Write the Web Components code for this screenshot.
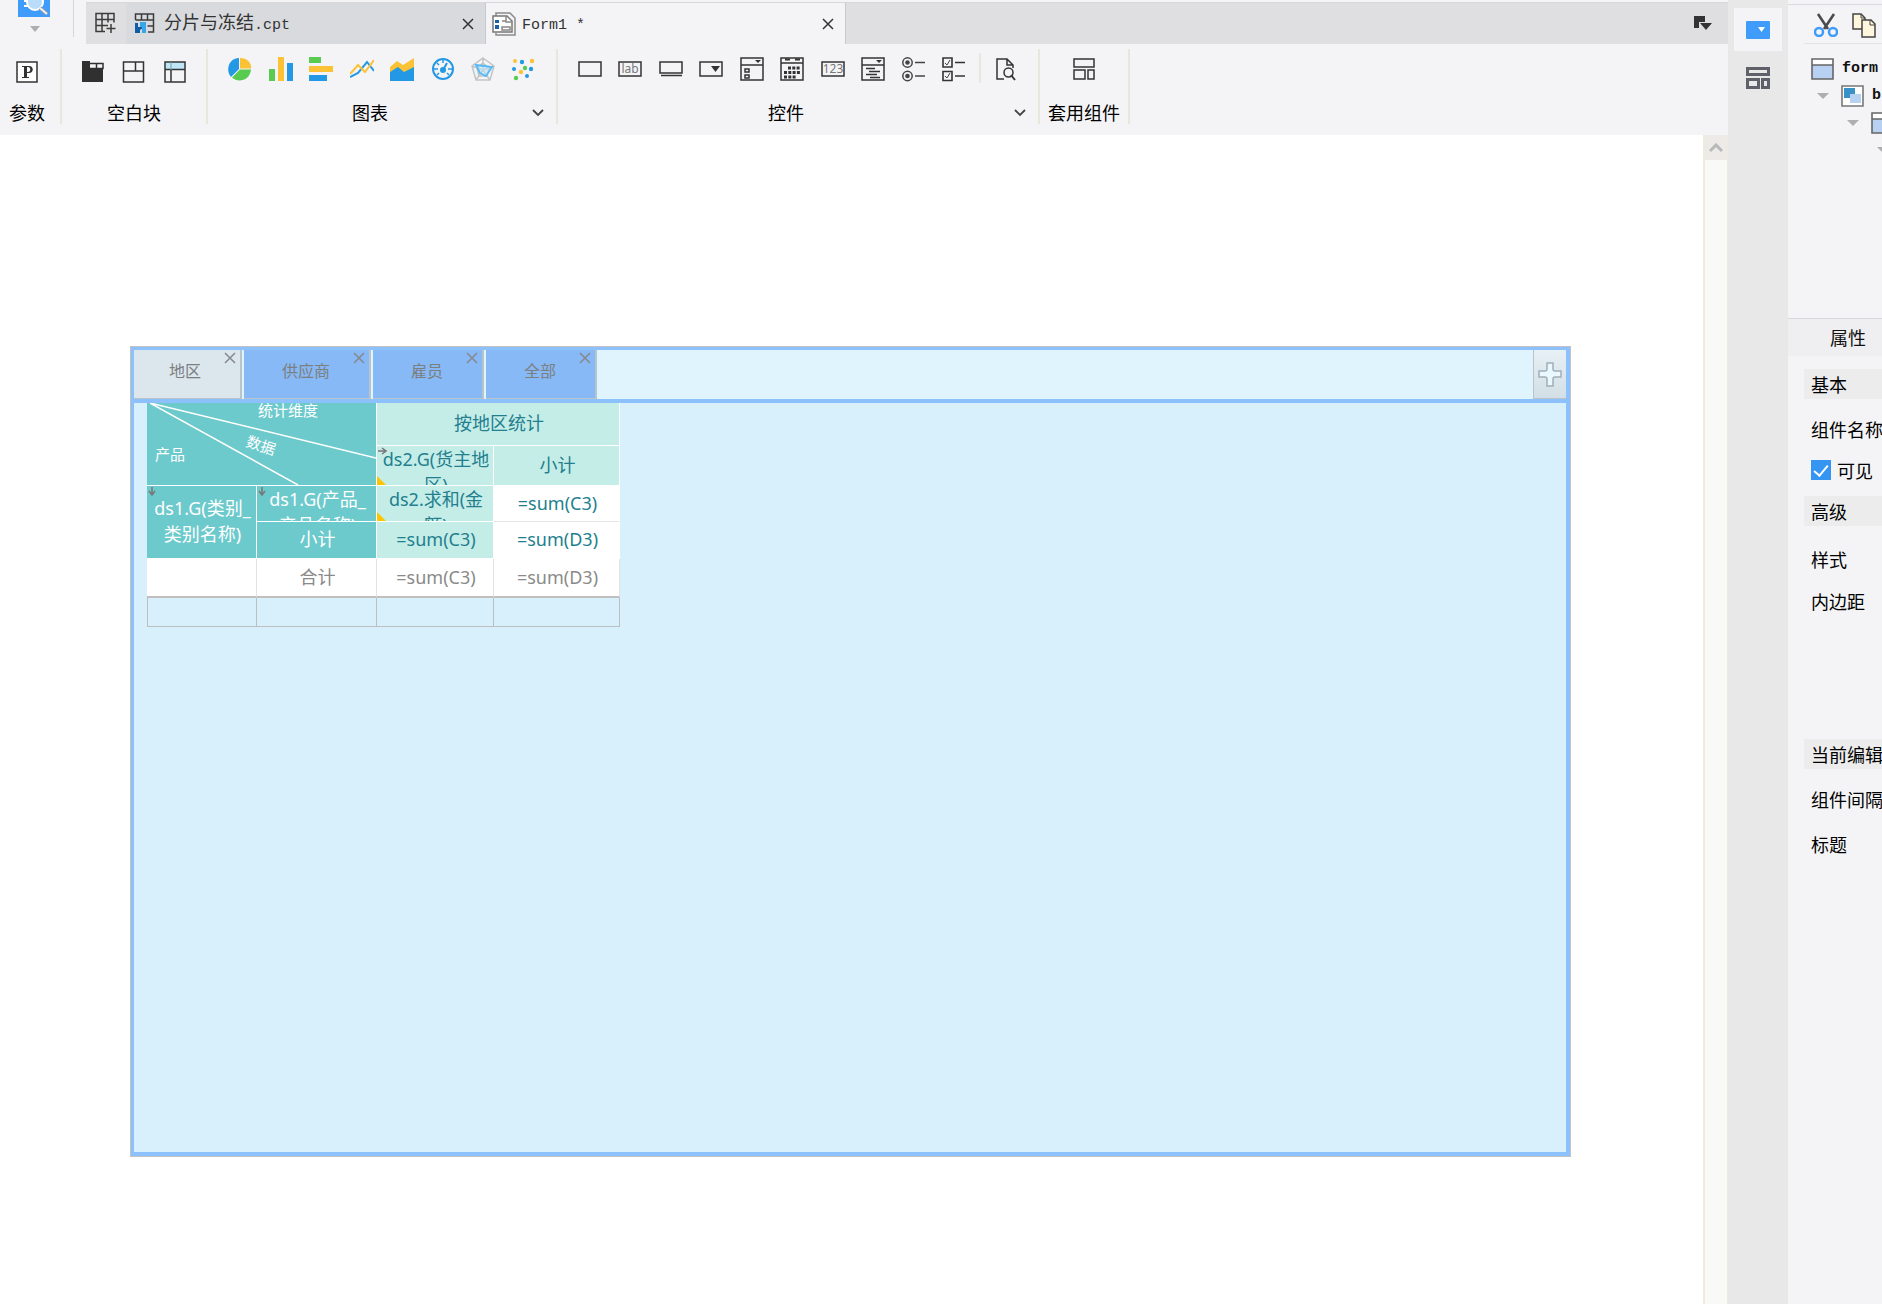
<!DOCTYPE html>
<html lang="zh-CN">
<head>
<meta charset="utf-8">
<title>Form1</title>
<style>
  html, body {
    margin: 0;
    height: 100%;
  }
  body {
    font-family: "Noto Sans CJK SC", sans-serif;
    font-size: 18px;
    line-height: 24px;
    color: #111;
    overflow: hidden;
  }
</style>
</head>
<body>
<report-designer></report-designer>

<script>
const icons = {
  preview: `<path d="M0 0h32v17H0z" fill="#409cfa"/><path d="M6 0h8v2H6zM6 5h7v2H6z" fill="#fff"/><circle cx="17" cy="2" r="8" fill="#b9dcf8" stroke="#fff" stroke-width="2"/><path d="m22 8 7 6" stroke="#8c98a4" stroke-width="4"/><path d="m22 8 7 6" stroke="#eef2f5" stroke-width="2"/><path d="M12 26h10l-5 6z" fill="#aeaeae"/>`,
  newGrid: `<path d="M2 13.500V1.500h18v9M2 7.500h18M8 1.500v18M14 1.500v9M2 13.500h12M2 12v7.500h9M17 12v9M12.500 16.500h9" fill="none" stroke="#3c3c3c" stroke-width="1.500"/>`,
  cpt: `<path d="M1.500 8V2h18v18H14M1.500 8h18M7.500 2v6M13.500 2v6M13.500 14h6" fill="none" stroke="#3c3c3c" stroke-width="1.500"/><path d="M1 11h3v4h3l2-3v4l-3 2v3H1z" fill="#0f5ca8"/><path d="M6 10h6v11H8v-6H6z" fill="#36a7e8"/>`,
  form: `<path d="M4 5V1h14l5 5v17H4v-2" fill="#f4f4f7" stroke="#8a8a8a" stroke-width="1.500"/><path d="M1 4h14l5 5v11H1z" fill="#fff" stroke="#777" stroke-width="1.500"/><path d="M14 4v6h6M10 9h4M10 15h8v3h-8z" fill="none" stroke="#888" stroke-width="1.500"/><path d="M3 8h4v3H3zM3 13h4v4H3z" fill="#1660ad"/>`,
  close: `<path d="m1 1 10 10M11 1 1 11" fill="none" stroke="currentColor" stroke-width="1.500"/>`,
  chevron: `<path d="m1 1 5 5 5-5" fill="none" stroke="#444" stroke-width="1.800"/>`,
  windows: `<path d="M0 1h11v6H5v6H0z" fill="#333"/><path d="M6 8h12l-6 7z" fill="#333"/>`,
  param: `<path d="M2 5h20v20H2z" fill="#fff" stroke="#333" stroke-width="1.500"/><path d="M7 9h7c5 0 5 7 0 7h-2v4h2v1H7v-1h2V10H7zm5 1v5h1c3 0 3-5 0-5z" fill="#333" fill-rule="evenodd"/>`,
  blockTab: `<path d="M1 4h8v7h13v14H1z" fill="#303030"/><path d="M9 6.500h13v5H9M15.500 6v5" fill="none" stroke="#303030" stroke-width="1.500"/>`,
  blockSplit: `<path d="M1.500 5h20v20h-20zM1.500 14h20M13.500 5v9" fill="none" stroke="#333" stroke-width="1.500"/>`,
  blockGrid: `<path d="M2 5h20v8H2z" fill="#bfe6f8"/><path d="M2 5h20v20H2zM2 12.500h20M8 12v13" fill="none" stroke="#333" stroke-width="1.500"/><path d="M8 5v8" stroke="#7f9aa6"/>`,
  pie: `<path d="M11 12V1C1 1-3 13 3 20z" fill="#2399e5"/><path d="M12 11.500V1c7 0 12 5 11 10.500z" fill="#fbc236"/><path d="m12 12.500-8 8c6 6 18 3 19-8z" fill="#5acb51"/>`,
  bars: `<path d="M0 12h6v12H0z" fill="#5acb51"/><path d="M9 0h6v24H9z" fill="#fbc236"/><path d="M18 6h6v18h-6z" fill="#2399e5"/>`,
  hbars: `<path d="M0 0h12v6H0z" fill="#5acb51"/><path d="M0 9h24v6H0z" fill="#fbc236"/><path d="M0 18h18v6H0z" fill="#2399e5"/>`,
  line: `<path d="m0 20 8-4 9-11 7 9" fill="none" stroke="#2399e5" stroke-width="2"/><path d="M0 17 8 8l7 7 9-12" fill="none" stroke="#fbc236" stroke-width="2"/>`,
  area: `<path d="M0 10h24v14H0z" fill="#2399e5"/><path d="m0 10 7-6 6 4L24 1v9L14 15l-6-5-8 5z" fill="#fbc236"/>`,
  gauge: `<circle cx="12" cy="12" r="10" fill="none" stroke="#2399e5" stroke-width="2"/><path d="M12 3v3M3 12h4M17 12h4M6 18l2-2M18 18l-2-2M6 6l2 2" stroke="#2399e5" stroke-width="1.500"/><circle cx="12" cy="13" r="3" fill="#2399e5"/><path d="m12 13 4-7" stroke="#2399e5" stroke-width="2"/>`,
  radar: `<path d="m12 1 11 8-4 14H5L1 9zM12 6l6 5-2 8H8l-2-8zM12 1v11M1 9l11 4M23 9l-11 4M5 23l7-10 7 10" fill="none" stroke="#c2c4c6" stroke-width="1.500"/><path d="m5 8 16 2-6 9-6-3z" fill="#b9e3fb88" stroke="#58baf5" stroke-width="1.800"/>`,
  scatter: `<g fill="#fbc236"><circle cx="3" cy="4" r="2"/><circle cx="20" cy="4" r="2.200"/><circle cx="9" cy="15" r="2.200"/></g><g fill="#2399e5"><circle cx="10" cy="5" r="2.200"/><circle cx="2" cy="12" r="2"/><circle cx="19" cy="12" r="2.200"/><circle cx="15" cy="19" r="2"/></g><g fill="#5acb51"><circle cx="13" cy="11" r="2.200"/><circle cx="4" cy="21" r="2.200"/></g>`,
  text: `<path d="M1 5h22v14H1z" fill="none" stroke="#333" stroke-width="1.500"/>`,
  label: `<path d="M1 5h22v14H1z" fill="none" stroke="#333" stroke-width="1.500"/><text x="12" y="16" text-anchor="middle" font-family="Noto Sans" font-size="12" fill="#777">lab</text>`,
  button: `<path d="M1 5h22v11H1zM2 18.500h21" fill="none" stroke="#333" stroke-width="1.500"/>`,
  combo: `<path d="M1 5h22v14H1z" fill="none" stroke="#333" stroke-width="1.500"/><path d="M12 9h9l-4.500 6z" fill="#333"/>`,
  comboCheck: `<path d="M1 1h22v22H1zM1 8h22M5 12h4v3H5zM5 18h4v3H5z" fill="none" stroke="#333" stroke-width="1.500"/><path d="M15 3h6l-3 3z" fill="#333"/>`,
  date: `<path d="M1 1h22v22H1zM1 6h22" fill="none" stroke="#333" stroke-width="1.500"/><path d="M5 2.500h5M15 2.500h5" stroke="#333" stroke-width="2"/><path d="M8 11h12M4 15.500h16M4 20h12" stroke="#333" stroke-width="3" stroke-dasharray="3 1.300"/>`,
  number: `<path d="M1 5h22v14H1z" fill="none" stroke="#333" stroke-width="1.500"/><text x="12" y="16" text-anchor="middle" font-family="Noto Sans" font-size="12" fill="#777">123</text>`,
  tree: `<path d="M1 1h22v22H1zM1 8h22M5 11.500h9M8 14.500h11M5 17.500h11M9 20.500h10" fill="none" stroke="#333" stroke-width="1.500"/><path d="M15 3h6l-3 3z" fill="#333"/>`,
  radio: `<g fill="none" stroke="#444" stroke-width="1.500"><circle cx="5.500" cy="5.500" r="4.700"/><circle cx="5.500" cy="19" r="4.700"/><path d="M13 5.500h10M13 19h10"/></g><circle cx="5.500" cy="5.500" r="2.300" fill="#444"/><circle cx="5.500" cy="19" r="2.300" fill="#444"/>`,
  check: `<path d="M1 1h9v9H1zM1 14.500h9v9H1zM13 5.500h10M13 19h10" fill="none" stroke="#333" stroke-width="1.600"/><path d="m3 6 2 2 3-5M3 19l2 2 3-5" fill="none" stroke="#444"/>`,
  find: `<path d="M10 22H3V2h10l6 6v3M13 2v6h6" fill="none" stroke="#333" stroke-width="1.500"/><circle cx="14.500" cy="15.500" r="4.500" fill="none" stroke="#333" stroke-width="1.500"/><path d="m17 18 4 5" stroke="#333" stroke-width="2"/>`,
  widget: `<path d="M2 2h20v8H2zM2 13h11v9H2zM16 13h6v9h-6z" fill="none" stroke="#333" stroke-width="1.500"/>`,
  railProps: `<rect y="1" width="24" height="18" rx="1" fill="#409cfa"/><path d="M12 7h7l-3.500 5z" fill="#fff"/>`,
  railWidget: `<path d="M1.500 1.500h21v6h-21zM1.500 12.500h11v8h-11zM16.500 12.500h6v8h-6z" fill="none" stroke="#5f6069" stroke-width="3"/>`,
  cut: `<path d="m4 1 10 15M20 1 10 16" stroke="#4a4a4a" stroke-width="2.600"/><circle cx="5" cy="19" r="4" fill="none" stroke="#409cfa" stroke-width="2.500"/><circle cx="19" cy="19" r="4" fill="none" stroke="#409cfa" stroke-width="2.500"/>`,
  copy: `<path d="M1 1h8l4 4v11H1z" fill="#fff6dc" stroke="#444" stroke-width="1.500"/><path d="M9 1v4h4" fill="none" stroke="#444"/><path d="M10 7h9l4 4v13H10z" fill="#fff6dc" stroke="#444" stroke-width="1.500"/><path d="M18 7v5h5" fill="none" stroke="#444"/>`,
  nodeForm: `<path d="M1 1h21v20H1z" fill="#fff"/><path d="M1 7h21v14H1z" fill="#b8d0f2"/><path d="M1 1h21v20H1zM1 7h21" fill="none" stroke="#666" stroke-width="1.600"/>`,
  nodeBody: `<path d="M1 1h21v20H1z" fill="#fff" stroke="#777" stroke-width="1.600"/><path d="M3 3h11v10H3z" fill="#3892c8"/><path d="M9 9h11v9H9z" fill="#b8d0f2"/>`,
  up: `<path d="m1 8 6-6 6 6" fill="none" stroke="#b9b9b9" stroke-width="3"/>`,
  plus: `<path d="M9 1h6v6q0 2 2 2h6v6h-6q-2 0-2 2v7H9v-7q0-2-2-2H1V9h6q2 0 2-2z" fill="#e9f7ff" stroke="#a2afb6" stroke-width="1.500"/>`
}

const svg = (name, w, h) => `<svg width="${w}" height="${h}" viewBox="0 0 ${w} ${h}" aria-hidden="true">${icons[name]}</svg>`

const base = `
  * { box-sizing: border-box; }
  svg { display: block; flex: none; }
  button {
    display: flex;
    align-items: center;
    justify-content: center;
    padding: 0;
    border: 0;
    background: none;
    color: inherit;
    font: inherit;
    cursor: pointer;
  }
`

class BaseElement extends HTMLElement {
  constructor() {
    super()
    this.attachShadow({ mode: "open" })
  }
  connectedCallback() {
    this.shadowRoot.innerHTML = `<style>${base}</style>${this.render()}`
  }
}

// <tool-button icon="pie" name="饼图" w="24" h="26">
class ToolButton extends BaseElement {
  render() {
    const w = this.getAttribute("w") || 24
    const h = this.getAttribute("h") || 26
    return `
      <style>:host { display: block; flex: none; }</style>
      <button type="button" aria-label="${this.getAttribute("name")}">${svg(this.getAttribute("icon"), w, h)}</button>
    `
  }
}
customElements.define("tool-button", ToolButton)

class DocTab extends BaseElement {
  render() {
    return `
      <style>
        :host {
          display: flex;
          align-items: center;
          gap: 6px;
          width: 360px;
          padding: 0 11px 0 8px;
          background: #d9dade;
          border-right: 1px solid #c8c9cd;
          color: #333;
        }
        :host([active]) { background: #f4f4f7; padding-left: 6px; }
        .title { flex: 1; }
      </style>
      ${svg(this.getAttribute("icon"), 24, 24)}
      <span class="title"><slot></slot></span>
      <button type="button" aria-label="关闭">${svg("close", 12, 12)}</button>
    `
  }
}
customElements.define("doc-tab", DocTab)

class RibbonGroup extends BaseElement {
  render() {
    const more = this.hasAttribute("more") ? `<button type="button" aria-label="更多">${svg("chevron", 12, 8)}</button>` : ""
    return `
      <style>
        :host {
          display: flex;
          flex-direction: column;
          gap: 18px;
          flex: none;
          height: 75px;
          padding-top: 8px;
          border-right: 2px solid #e9e7dc;
          box-sizing: border-box;
        }
        .tools { display: flex; justify-content: center; gap: 17px; }
        :host([more]) .tools { padding: 0 20px; justify-content: space-between; gap: 0; }
        .caption { display: flex; line-height: 23px; color: #000; }
        .caption span { flex: 1; text-align: center; white-space: nowrap; }
        .caption button { width: 24px; justify-content: flex-start; }
      </style>
      <div class="tools"><slot></slot></div>
      <div class="caption"><span>${this.getAttribute("label")}</span>${more}</div>
    `
  }
}
customElements.define("ribbon-group", RibbonGroup)

class AppRibbon extends BaseElement {
  tools(list) {
    return list.map(([icon, name]) => `<tool-button icon="${icon}" name="${name}"></tool-button>`).join("")
  }
  render() {
    return `
      <style>
        :host { display: flex; height: 91px; padding-top: 5px; background: #f4f4f7; box-sizing: border-box; }
        .param { width: 62px; padding-right: 6px; }
        .block { width: 146px; }
        .chart { width: 350px; }
        .control { width: 482px; }
        .reuse { width: 90px; }
        .row { display: flex; flex: 1; justify-content: space-between; }
        .rule { width: 2px; height: 30px; margin: -4px 13px 0; background: #e9e7dc; }
      </style>
      <ribbon-group class="param" label="参数">${this.tools([["param", "参数"]])}</ribbon-group>
      <ribbon-group class="block" label="空白块">${this.tools([["blockTab", "tab块"], ["blockSplit", "绝对画布块"], ["blockGrid", "报表块"]])}</ribbon-group>
      <ribbon-group class="chart" label="图表" more><div class="row">${this.tools([
        ["pie", "饼图"], ["bars", "柱形图"], ["hbars", "条形图"], ["line", "折线图"],
        ["area", "面积图"], ["gauge", "仪表盘"], ["radar", "雷达图"], ["scatter", "散点图"]
      ])}</div></ribbon-group>
      <ribbon-group class="control" label="控件" more>
        <div class="row">${this.tools([
          ["text", "文本"], ["label", "标签"], ["button", "按钮"], ["combo", "下拉框"], ["comboCheck", "下拉复选框"],
          ["date", "日期"], ["number", "数字"], ["tree", "下拉树"], ["radio", "单选按钮组"], ["check", "复选按钮组"]
        ])}</div>
        <div class="rule"></div>
        ${this.tools([["find", "查询"]])}
      </ribbon-group>
      <ribbon-group class="reuse" label="套用组件">${this.tools([["widget", "套用组件"]])}</ribbon-group>
    `
  }
}
customElements.define("app-ribbon", AppRibbon)

class FormTab extends BaseElement {
  render() {
    return `
      <style>
        :host {
          display: block;
          position: relative;
          box-sizing: border-box;
          height: 49px;
          margin-right: 2px;
          padding: 8px 39px 0 38px;
          background: #86b9f6;
          border: solid #b9c3ca;
          border-width: 0 2px 1px 0;
          color: #7c7f80;
          font-size: 16px;
          white-space: nowrap;
        }
        :host([active]) { background: #dbe7ed; padding-left: 35px; }
        button { position: absolute; top: 2px; right: 4px; color: #85898c; }
      </style>
      <slot></slot>
      <button type="button" aria-label="关闭">${svg("close", 12, 12)}</button>
    `
  }
}
customElements.define("form-tab", FormTab)

class ReportTable extends BaseElement {
  render() {
    const down = `<svg class="mark" width="8" height="9" viewBox="0 0 8 9"><path d="M4 0v7M1 4l3 4 3-4" fill="none" stroke="#777" stroke-width="1.500"/></svg>`
    const right = `<svg class="mark" width="9" height="8" viewBox="0 0 9 8"><path d="M0 4h7M4 1l4 3-4 3" fill="none" stroke="#777" stroke-width="1.500"/></svg>`
    const corner = `<i class="corner"></i>`
    return `
      <style>
        :host { display: block; }
        table {
          width: 473px;
          table-layout: fixed;
          border-collapse: separate;
          border-spacing: 0;
          font-family: "Noto Sans", "Noto Sans CJK SC", sans-serif;
          font-size: 18px;
          line-height: 26px;
          text-align: center;
          color: #237f8e;
        }
        td {
          position: relative;
          padding: 0 0 2px 2px;
          border: solid #fff;
          border-width: 0 1px 1px 0;
          white-space: nowrap;
        }
        td.clip { padding-bottom: 0; }
        td div { overflow: hidden; }
        .r2 { height: 39px; }
        .r3 { height: 35px; }
        .teal { background: #6cc9cc; color: #fff; }
        .mint { background: #c4ede8; }
        .white { background: #fff; border-color: #fff; }
        .line { border-bottom-color: #e6e6e6; }
        .total td { background: #fff; color: #8a8a8a; border-color: #e2e2e2; border-bottom: 2px solid #bfbfbf; }
        .blank td { border-color: #bcbfc1; }
        .blank td:first-child { border-left-width: 1px; }
        .mark { position: absolute; left: 1px; top: 1px; }
        .corner { position: absolute; left: 0; bottom: 0; border: solid transparent; border-width: 9px 0 0 9px; border-left-color: #fdc500; }
        .diagonal svg { position: absolute; left: 0; top: 0; }
        .diagonal span { position: absolute; font-size: 15px; line-height: 20px; }
        .dim { left: 111px; top: -3px; }
        .data { left: 99px; top: 32px; transform: rotate(18deg); }
        .product { left: 8px; top: 41px; }
      </style>
      <table>
        <colgroup><col style="width:110px"><col style="width:120px"><col style="width:117px"><col style="width:126px"></colgroup>
        <tr style="height:43px">
          <td class="teal diagonal" colspan="2" rowspan="2">
            <svg width="229" height="82" viewBox="0 0 229 82"><path d="m3 0 226 55M3 0l148 82" fill="none" stroke="#fff" stroke-width="1.500"/></svg>
            <span class="dim">统计维度</span><span class="data">数据</span><span class="product">产品</span>
          </td>
          <td class="mint" colspan="2">按地区统计</td>
        </tr>
        <tr style="height:40px">
          <td class="mint clip">${right}<div class="r2">ds2.G(货主地<br>区)</div>${corner}</td>
          <td class="mint">小计</td>
        </tr>
        <tr style="height:36px">
          <td class="teal" rowspan="2">${down}ds1.G(类别_<br>类别名称)</td>
          <td class="teal clip">${down}<div class="r3">ds1.G(产品_<br>产品名称)</div></td>
          <td class="mint clip"><div class="r3">ds2.求和(金<br>额)</div>${corner}</td>
          <td class="white line">=sum(C3)</td>
        </tr>
        <tr style="height:37px">
          <td class="teal">小计</td>
          <td class="mint">=sum(C3)</td>
          <td class="white">=sum(D3)</td>
        </tr>
        <tr class="total" style="height:39px">
          <td></td><td>合计</td><td>=sum(C3)</td><td>=sum(D3)</td>
        </tr>
        <tr class="blank" style="height:29px">
          <td></td><td></td><td></td><td></td>
        </tr>
      </table>
    `
  }
}
customElements.define("report-table", ReportTable)

class FormCanvas extends BaseElement {
  render() {
    return `
      <style>
        :host { display: flex; flex: 1; min-height: 0; background: #fff; }
        .form {
          flex: 1;
          display: flex;
          flex-direction: column;
          margin: 212px 133px 148px 131px;
          border: solid #8cc1fb;
          border-width: 3px 4px 4px 3px;
          box-shadow: 0 0 0 1px #c0c2c6;
          background: #d8effc;
        }
        .tabs { display: flex; height: 53px; background: #e0f4fe; border-bottom: 4px solid #8cc1fb; }
        .add {
          width: 33px;
          height: 49px;
          margin-left: auto;
          background: linear-gradient(#e6f0f5, #d3dfe6);
          border-left: 1px solid #b9c3ca;
          border-bottom: 1px solid #b9c3ca;
        }
        .body { flex: 1; padding-left: 13px; }
        .scroll {
          width: 25px;
          background: #f9f9f8;
          border: solid #efeadc;
          border-width: 0 1px 0 2px;
        }
        .scroll button { width: 100%; height: 25px; background: #ecebe8; }
      </style>
      <div class="form">
        <div class="tabs">
          <form-tab active>地区</form-tab><form-tab>供应商</form-tab><form-tab>雇员</form-tab><form-tab>全部</form-tab>
          <button class="add" type="button" aria-label="添加">${svg("plus", 24, 25)}</button>
        </div>
        <div class="body"><report-table></report-table></div>
      </div>
      <div class="scroll"><button type="button" aria-label="向上滚动">${svg("up", 14, 10)}</button></div>
    `
  }
}
customElements.define("form-canvas", FormCanvas)

class SideRail extends BaseElement {
  render() {
    return `
      <style>
        :host { display: flex; flex-direction: column; align-items: center; width: 60px; padding-top: 8px; background: #e8e8e8; box-sizing: border-box; }
        button { width: 48px; height: 43px; }
        button + button { margin-top: 5px; }
        .active { background: #f4f4f7; }
      </style>
      <button class="active" type="button" aria-label="组件设置">${svg("railProps", 24, 20)}</button>
      <button type="button" aria-label="组件库">${svg("railWidget", 24, 22)}</button>
    `
  }
}
customElements.define("side-rail", SideRail)

class TreeNode extends BaseElement {
  render() {
    const arrow = this.hasAttribute("level") ? `<svg width="12" height="6" viewBox="0 0 12 6"><path d="M0 0h12L6 6z" fill="#aeaeae"/></svg>` : ""
    return `
      <style>
        :host {
          display: flex;
          align-items: center;
          height: 27px;
          gap: 8px;
          font: bold 15px/22px "Liberation Mono", monospace;
          color: #111;
          white-space: nowrap;
        }
        :host([level]) { gap: 12px; padding-left: 6px; }
        :host([level="2"]) { padding-left: 36px; }
        :host([level="3"]) { padding-left: 66px; }
        span { margin-left: -4px; }
        :host(:not([level])) span { margin: 0; }
      </style>
      ${arrow}${this.getAttribute("icon") ? svg(this.getAttribute("icon"), 23, 22) : ""}<span><slot></slot></span>
    `
  }
}
customElements.define("tree-node", TreeNode)

class PropertyPanel extends BaseElement {
  render() {
    return `
      <style>
        :host { display: block; width: 94px; overflow: hidden; background: #f4f4f7; white-space: nowrap; }
        .tools { display: flex; gap: 14px; height: 39px; margin-top: 4px; padding: 8px 0 0 26px; border-top: 1px solid #dadade; }
        .tree { height: 269px; margin-left: 16px; padding: 11px 0 0 7px; border-top: 1px solid #e2e2e4; }
        .heading { height: 38px; margin-top: 6px; padding-left: 42px; line-height: 36px; background: #efeff1; border-top: 1px solid #d8d8dc; }
        .section, .row { display: flex; align-items: center; height: 30px; padding-left: 7px; }
        .section { background: #ececec; }
        .props { display: flex; flex-direction: column; margin-left: 16px; padding-top: 13px; color: #000; }
        .name { margin-top: 15px; }
        .visible { margin: 11px 0; gap: 6px; }
        .style { margin-top: 18px; }
        .padding { margin-top: 12px; }
        .editing { margin-top: 123px; }
        .gap, .title { margin-top: 15px; }
        input {
          appearance: none;
          width: 20px;
          height: 20px;
          margin: 0;
          background: #3496f2;
          display: grid;
          place-items: center;
        }
        input:checked::before {
          content: "";
          width: 6px;
          height: 12px;
          margin-bottom: 3px;
          border: solid #fff;
          border-width: 0 2px 2px 0;
          transform: rotate(40deg);
        }
      </style>
      <div class="tools">
        <tool-button icon="cut" name="剪切" h="24"></tool-button>
        <tool-button icon="copy" name="复制" h="25"></tool-button>
      </div>
      <div class="tree">
        <tree-node icon="nodeForm">form</tree-node>
        <tree-node icon="nodeBody" level="1">b</tree-node>
        <tree-node icon="nodeForm" level="2"></tree-node>
        <tree-node level="3"></tree-node>
      </div>
      <div class="heading">属性</div>
      <div class="props">
        <div class="section">基本</div>
        <div class="row name">组件名称</div>
        <label class="row visible"><input type="checkbox" checked>可见</label>
        <div class="section">高级</div>
        <div class="row style">样式</div>
        <div class="row padding">内边距</div>
        <div class="section editing">当前编辑</div>
        <div class="row gap">组件间隔</div>
        <div class="row title">标题</div>
      </div>
    `
  }
}
customElements.define("property-panel", PropertyPanel)

class ReportDesigner extends BaseElement {
  render() {
    return `
      <style>
        :host { display: flex; height: 100vh; background: #f4f4f7; }
        main { flex: 1; min-width: 0; display: flex; flex-direction: column; }
        header { display: flex; height: 44px; }
        .preview { width: 74px; padding-left: 18px; border-right: 1px solid #d6d6da; height: 37px; }
        .strip { flex: 1; display: flex; margin: 2px 0 0 12px; border-top: 1px solid #d8d8da; background: #dfdfe1; }
        .new { display: flex; width: 40px; padding: 9px 0 0 8px; }
        .mono { font: 15px/24px "Liberation Mono", monospace; }
        .windows { margin-left: auto; padding: 12px 15px 0 0; }
      </style>
      <main>
        <header>
          <div class="preview"><tool-button icon="preview" name="预览" w="32" h="34"></tool-button></div>
          <div class="strip">
            <div class="new"><tool-button icon="newGrid" name="新建" h="24"></tool-button></div>
            <doc-tab icon="cpt">分片与冻结<span class="mono">.cpt</span></doc-tab>
            <doc-tab icon="form" active><span class="mono">Form1 *</span></doc-tab>
            <tool-button class="windows" icon="windows" name="窗口列表" w="19" h="18"></tool-button>
          </div>
        </header>
        <app-ribbon></app-ribbon>
        <form-canvas></form-canvas>
      </main>
      <side-rail></side-rail>
      <property-panel></property-panel>
    `
  }
}
customElements.define("report-designer", ReportDesigner)
</script>
</body>
</html>
